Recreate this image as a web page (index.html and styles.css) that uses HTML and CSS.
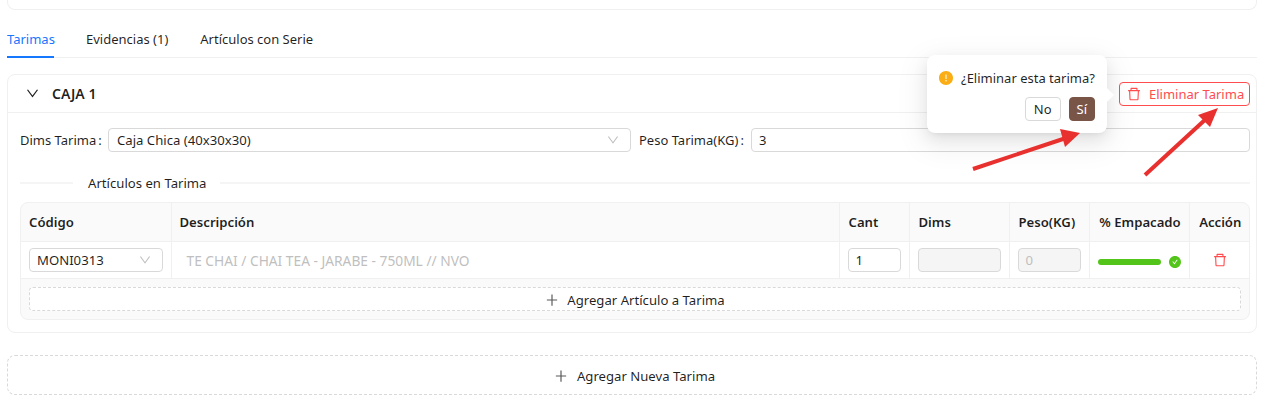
FILE: index.html
```html
<!DOCTYPE html>
<html>

<head>
	<title>Tarimas</title>
	<link rel="stylesheet" href="styles.css">
</head>

<body>
	<div class="top-card"></div>

	<div class="tabs">
		<span class="tab active">Tarimas</span>
		<span class="tab">Evidencias (1)</span>
		<span class="tab">Artículos con Serie</span>
	</div>

	<div class="panel">
		<div class="panel-head">
			<svg class="chevron" viewBox="64 64 896 896"><path d="M884 256h-75c-5.1 0-9.9 2.5-12.9 6.6L512 654.2 227.9 262.6c-3-4.1-7.8-6.6-12.9-6.6h-75c-6.5 0-10.3 7.4-6.5 12.7l352.6 486.1c12.8 17.6 39 17.6 51.7 0l352.6-486.1c3.9-5.3.1-12.7-6.4-12.7z"/></svg>
			<span class="panel-title">CAJA 1</span>
			<button class="btn-delete">
				<svg class="icon-trash" viewBox="64 64 896 896"><path d="M360 184h-8c4.4 0 8-3.6 8-8v8h304v-8c0 4.4 3.6 8 8 8h-8v72h72v-80c0-35.3-28.7-64-64-64H352c-35.3 0-64 28.7-64 64v80h72v-72zm504 72H160c-17.7 0-32 14.3-32 32v32c0 4.4 3.6 8 8 8h60.4l24.7 523c1.6 34.1 29.8 61 63.9 61h454c34.2 0 62.3-26.8 63.9-61l24.7-523H888c4.4 0 8-3.6 8-8v-32c0-17.7-14.3-32-32-32zM731.3 840H292.7l-24.2-512h487l-24.2 512z"/></svg>
				<span>Eliminar Tarima</span>
			</button>
		</div>

		<div class="panel-body">
			<div class="form-row">
				<div class="field field-dims">
					<label class="label-dims">Dims Tarima<span class="colon">:</span></label>
					<div class="select grow">
						<span>Caja Chica (40x30x30)</span>
						<svg class="select-arrow" viewBox="64 64 896 896"><path d="M884 256h-75c-5.1 0-9.9 2.5-12.9 6.6L512 654.2 227.9 262.6c-3-4.1-7.8-6.6-12.9-6.6h-75c-6.5 0-10.3 7.4-6.5 12.7l352.6 486.1c12.8 17.6 39 17.6 51.7 0l352.6-486.1c3.9-5.3.1-12.7-6.4-12.7z"/></svg>
					</div>
				</div>
				<div class="field field-peso">
					<label class="label-peso">Peso Tarima(KG)<span class="colon">:</span></label>
					<div class="input grow">3</div>
				</div>
			</div>

			<div class="divider"><span>Artículos en Tarima</span></div>

			<div class="table-wrap">
				<table>
					<colgroup>
						<col class="col-codigo">
						<col>
						<col class="col-cant">
						<col class="col-dims">
						<col class="col-peso">
						<col class="col-pct">
						<col class="col-accion">
					</colgroup>
					<thead>
						<tr>
							<th>Código</th>
							<th>Descripción</th>
							<th>Cant</th>
							<th>Dims</th>
							<th>Peso(KG)</th>
							<th class="center">% Empacado</th>
							<th class="center">Acción</th>
						</tr>
					</thead>
					<tbody>
						<tr>
							<td>
								<div class="select">
									<span>MONI0313</span>
									<svg class="select-arrow" viewBox="64 64 896 896"><path d="M884 256h-75c-5.1 0-9.9 2.5-12.9 6.6L512 654.2 227.9 262.6c-3-4.1-7.8-6.6-12.9-6.6h-75c-6.5 0-10.3 7.4-6.5 12.7l352.6 486.1c12.8 17.6 39 17.6 51.7 0l352.6-486.1c3.9-5.3.1-12.7-6.4-12.7z"/></svg>
								</div>
							</td>
							<td class="desc">TE CHAI / CHAI TEA - JARABE - 750ML // NVO</td>
							<td><div class="input">1</div></td>
							<td><div class="input disabled"></div></td>
							<td><div class="input disabled">0</div></td>
							<td>
								<div class="progress">
									<div class="progress-bar"></div>
									<svg class="icon-check" viewBox="64 64 896 896"><path d="M512 64C264.6 64 64 264.6 64 512s200.6 448 448 448 448-200.6 448-448S759.4 64 512 64zm193.5 301.7l-210.6 292a31.8 31.8 0 01-51.7 0L318.5 484.9c-3.8-5.3 0-12.7 6.5-12.7h46.9c10.2 0 19.9 4.9 25.9 13.3l71.2 98.8 157.2-218c6-8.3 15.6-13.3 25.9-13.3H699c6.5 0 10.3 7.4 6.5 12.7z"/></svg>
								</div>
							</td>
							<td class="cell-action">
								<svg class="icon-trash" viewBox="64 64 896 896"><path d="M360 184h-8c4.4 0 8-3.6 8-8v8h304v-8c0 4.4 3.6 8 8 8h-8v72h72v-80c0-35.3-28.7-64-64-64H352c-35.3 0-64 28.7-64 64v80h72v-72zm504 72H160c-17.7 0-32 14.3-32 32v32c0 4.4 3.6 8 8 8h60.4l24.7 523c1.6 34.1 29.8 61 63.9 61h454c34.2 0 62.3-26.8 63.9-61l24.7-523H888c4.4 0 8-3.6 8-8v-32c0-17.7-14.3-32-32-32zM731.3 840H292.7l-24.2-512h487l-24.2 512z"/></svg>
							</td>
						</tr>
					</tbody>
				</table>
				<div class="table-foot">
					<button class="btn-dashed">
						<svg class="icon-plus" viewBox="64 64 896 896"><path d="M482 152h60q8 0 8 8v704q0 8-8 8h-60q-8 0-8-8V160q0-8 8-8z"/><path d="M192 474h640q8 0 8 8v60q0 8-8 8H192q-8 0-8-8v-60q0-8 8-8z"/></svg>
						<span>Agregar Artículo a Tarima</span>
					</button>
				</div>
			</div>
		</div>
	</div>

	<button class="btn-dashed btn-new">
		<svg class="icon-plus" viewBox="64 64 896 896"><path d="M482 152h60q8 0 8 8v704q0 8-8 8h-60q-8 0-8-8V160q0-8 8-8z"/><path d="M192 474h640q8 0 8 8v60q0 8-8 8H192q-8 0-8-8v-60q0-8 8-8z"/></svg>
		<span>Agregar Nueva Tarima</span>
	</button>

	<!-- popconfirm over the delete button -->
	<div class="popover">
		<div class="popover-msg">
			<svg class="icon-warn" viewBox="64 64 896 896"><path d="M512 64C264.6 64 64 264.6 64 512s200.6 448 448 448 448-200.6 448-448S759.4 64 512 64zm-32 232c0-4.4 3.6-8 8-8h48c4.4 0 8 3.6 8 8v272c0 4.4-3.6 8-8 8h-48c-4.4 0-8-3.6-8-8V296zm32 440a48.01 48.01 0 010-96 48.01 48.01 0 010 96z"/></svg>
			<span>¿Eliminar esta tarima?</span>
		</div>
		<div class="popover-actions">
			<button class="btn-no">No</button>
			<button class="btn-yes">Sí</button>
		</div>
		<div class="popover-arrow"></div>
	</div>

	<!-- red arrows drawn over the screenshot -->
	<svg class="annotations" width="1286" height="403" viewBox="0 0 1286 403">
		<line x1="973" y1="169" x2="1066" y2="138" stroke="#e8302e" stroke-width="4"/>
		<polygon points="1080,133 1060,129 1065,147" fill="#e8302e"/>
		<line x1="1145" y1="175" x2="1207" y2="118" stroke="#e8302e" stroke-width="4"/>
		<polygon points="1218,108 1198,115 1210,127" fill="#e8302e"/>
	</svg>
</body>

</html>
```

FILE: styles.css
```css
body {
	font-family: "Noto Sans", Arial, sans-serif;
	font-size: 13.15px;
	color: rgba(0, 0, 0, 0.88);
	background-color: #fff;
	margin: 0;
	padding: 0 29px 0 7px;
	height: 403px;
	overflow: hidden;
}

svg {
	fill: currentColor;
	display: block;
	flex-shrink: 0;
}

button {
	font: inherit;
	color: inherit;
	background: #fff;
	cursor: pointer;
}

.top-card {
	height: 9px;
	border: 1px solid #f0f0f0;
	border-top: none;
	border-radius: 0 0 8px 8px;
}

/* tabs */
.tabs {
	display: flex;
	gap: 32px;
	height: 47px;
	font-size: 13px;
	border-bottom: 1px solid #f0f0f0;
	margin-bottom: 16px;
}

.tab {
	padding-top: 19px;
	line-height: 20px;
	box-sizing: border-box;
	height: 48px;
}

.tab.active {
	width: 47px;
	color: #1677ff;
	border-bottom: 2px solid #1677ff;
}

/* panel */
.panel {
	border: 1px solid #f0f0f0;
	border-radius: 8px;
	height: 259px;
	box-sizing: border-box;
}

.panel-head {
	display: flex;
	align-items: center;
	height: 37px;
	padding: 0 6px 0 18px;
	border-bottom: 1px solid #f0f0f0;
}

.chevron {
	width: 13px;
	height: 13px;
	margin-right: 13px;
}

.panel-title {
	font-size: 14px;
	font-weight: 600;
	flex: 1;
}

.btn-delete {
	display: flex;
	align-items: center;
	gap: 8px;
	width: 131px;
	height: 24px;
	box-sizing: border-box;
	padding: 0 7px;
	font-size: 13px;
	color: #ff4d4f;
	border: 1px solid #ff4d4f;
	border-radius: 4px;
	white-space: nowrap;
}

.btn-delete .icon-trash {
	width: 14px;
	height: 14px;
}

.panel-body {
	padding: 15px 6px 0 12px;
}

.form-row {
	display: flex;
	gap: 8px;
}

.field {
	display: flex;
	align-items: center;
	gap: 7px;
	font-size: 13px;
}

.field label {
	white-space: nowrap;
}

.field-dims {
	width: 611px;
}

.field-peso {
	flex: 1;
}

.label-dims {
	width: 81px;
}

.label-peso {
	width: 105px;
}

.colon {
	margin-left: 2px;
}

.grow {
	flex: 1;
}

.select,
.input {
	display: flex;
	align-items: center;
	justify-content: space-between;
	height: 24px;
	box-sizing: border-box;
	padding: 0 7px;
	background: #fff;
	border: 1px solid #d9d9d9;
	border-radius: 4px;
}

.field .select {
	padding-left: 8px;
	font-size: 13.15px;
}

.select-arrow {
	width: 12px;
	height: 12px;
	color: #bfbfbf;
	margin-right: 4px;
}

.input.disabled {
	background: #f5f5f5;
	color: #bfbfbf;
}

/* divider */
.divider {
	display: flex;
	align-items: center;
	margin: 20px 0 8px;
	height: 22px;
}

.divider::before,
.divider::after {
	content: "";
	height: 2px;
	background: #f5f5f5;
}

.divider::before {
	width: 53px;
}

.divider::after {
	flex: 1;
}

.divider span {
	padding: 0 13px 0 15px;
}

/* table */
.table-wrap {
	border: 1px solid #f0f0f0;
	border-radius: 8px;
	background: #fafafa;
	overflow: hidden;
}

table {
	width: 100%;
	table-layout: fixed;
	border-collapse: collapse;
}

.col-codigo { width: 150px; }
.col-cant { width: 70px; }
.col-dims { width: 100px; }
.col-peso { width: 80px; }
.col-pct { width: 100px; }
.col-accion { width: 60px; }

th {
	height: 38px;
	padding: 0 8px;
	text-align: left;
	font-weight: 600;
	white-space: nowrap;
	border-right: 1px solid #f0f0f0;
	border-bottom: 1px solid #f0f0f0;
}

th:nth-child(n+3) {
	padding-left: 9px;
}

td {
	height: 36px;
	padding: 0 8px;
	background: #fff;
	border-right: 1px solid #f0f0f0;
	border-bottom: 1px solid #f0f0f0;
}

th:last-child,
td:last-child {
	border-right: none;
}

th.center {
	padding: 0 0 0 2px;
	text-align: center;
}

td.desc {
	font-size: 13.75px;
	color: #bfbfbf;
	padding-left: 15px;
}

td.cell-action {
	padding: 0 7px 0 9px;
}

td .icon-trash {
	width: 14px;
	height: 14px;
	color: #ff4d4f;
	margin: 0 auto;
}

.progress {
	display: flex;
	align-items: center;
	gap: 8px;
	padding-top: 3px;
}

.progress-bar {
	width: 63px;
	height: 6px;
	background: #52c41a;
	border-radius: 3px;
}

.icon-check {
	width: 12px;
	height: 12px;
	color: #52c41a;
}

.table-foot {
	padding: 8px;
	height: 24px;
}

.btn-dashed {
	display: flex;
	align-items: center;
	justify-content: center;
	gap: 8px;
	width: 100%;
	height: 24px;
	box-sizing: border-box;
	padding: 1px 0 0;
	border: 1px dashed #d9d9d9;
	border-radius: 4px;
}

.icon-plus {
	width: 14px;
	height: 14px;
	color: #595959;
}

.btn-new {
	height: 40px;
	margin-top: 22px;
	padding-left: 5px;
	gap: 9px;
	border-radius: 8px;
}

/* popover */
.popover {
	position: absolute;
	left: 927px;
	top: 55px;
	width: 180px;
	height: 78px;
	box-sizing: border-box;
	padding: 12px;
	font-size: 13px;
	background: #fff;
	border-radius: 8px;
	box-shadow: 0 6px 16px rgba(0, 0, 0, 0.08), 0 3px 6px -4px rgba(0, 0, 0, 0.12), 0 9px 28px 8px rgba(0, 0, 0, 0.05);
}

.popover-msg {
	display: flex;
	align-items: center;
	gap: 8px;
	height: 22px;
	white-space: nowrap;
}

.icon-warn {
	width: 14px;
	height: 14px;
	color: #faad14;
}

.popover-actions {
	display: flex;
	justify-content: flex-end;
	gap: 8px;
	margin-top: 8px;
}

.btn-no,
.btn-yes {
	height: 24px;
	box-sizing: border-box;
	padding: 0 8px;
	border: 1px solid #d9d9d9;
	border-radius: 4px;
}

.btn-yes {
	padding: 0 7px;
	color: #fff;
	background: #795548;
	border-color: #795548;
}

.popover-arrow {
	position: absolute;
	right: -5px;
	top: 35px;
	width: 10px;
	height: 10px;
	background: #fff;
	transform: rotate(45deg);
}

.annotations {
	position: absolute;
	left: 0;
	top: 0;
	pointer-events: none;
}
```
